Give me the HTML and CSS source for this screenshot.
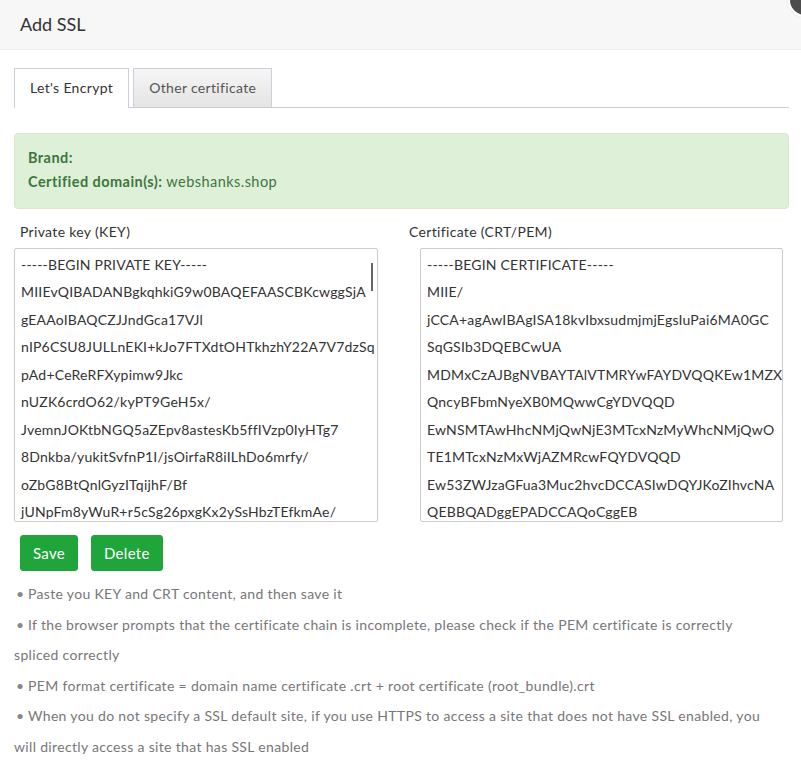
FILE: index.html
```html
<!DOCTYPE html>
<html>
<head>
  <meta charset="UTF-8" />
  <title>Add SSL</title>
  <link rel="stylesheet" href="styles.css">
</head>
<body>

<div class="layer">
  <div class="layer-title">Add SSL</div>
  <span class="layer-close"></span>

  <div class="layer-content">
    <!-- onglets -->
    <div class="tabs">
      <span class="tab active">Let's Encrypt</span>
      <span class="tab">Other certificate</span>
    </div>

    <div class="alert">
      <p><b>Brand:</b></p>
      <p><b>Certified domain(s):</b> webshanks.shop</p>
    </div>

    <div class="cert-grid">
      <div class="cert-col key-col">
        <div class="cert-label">Private key (KEY)</div>
        <div class="area-wrap">
          <textarea wrap="off" spellcheck="false">-----BEGIN PRIVATE KEY-----
MIIEvQIBADANBgkqhkiG9w0BAQEFAASCBKcwggSjA
gEAAoIBAQCZJJndGca17VJl
nIP6CSU8JULLnEKI+kJo7FTXdtOHTkhzhY22A7V7dzSq
pAd+CeReRFXypimw9Jkc
nUZK6crdO62/kyPT9GeH5x/
JvemnJOKtbNGQ5aZEpv8astesKb5ffIVzp0IyHTg7
8Dnkba/yukitSvfnP1I/jsOirfaR8iILhDo6mrfy/
oZbG8BtQnlGyzITqijhF/Bf
jUNpFm8yWuR+r5cSg26pxgKx2ySsHbzTEfkmAe/
aY4RmC0QAbD7mXlcVq2N</textarea>
          <span class="scroll-thumb"></span>
        </div>
      </div>
      <div class="cert-col crt-col">
        <div class="cert-label">Certificate (CRT/PEM)</div>
        <div class="area-wrap">
          <textarea wrap="off" spellcheck="false">-----BEGIN CERTIFICATE-----
MIIE/
jCCA+agAwIBAgISA18kvIbxsudmjmjEgsIuPai6MA0GC
SqGSIb3DQEBCwUA
MDMxCzAJBgNVBAYTAlVTMRYwFAYDVQQKEw1MZX
QncyBFbmNyeXB0MQwwCgYDVQQD
EwNSMTAwHhcNMjQwNjE3MTcxNzMyWhcNMjQwO
TE1MTcxNzMxWjAZMRcwFQYDVQQD
Ew53ZWJzaGFua3Muc2hvcDCCASIwDQYJKoZIhvcNA
QEBBQADggEPADCCAQoCggEB</textarea>
        </div>
      </div>
    </div>

    <div class="actions">
      <button class="btn">Save</button>
      <button class="btn">Delete</button>
    </div>

    <ul class="help">
      <li>Paste you KEY and CRT content, and then save it</li>
      <li>If the browser prompts that the certificate chain is incomplete, please check if the PEM certificate is correctly spliced correctly</li>
      <li>PEM format certificate = domain name certificate .crt + root certificate (root_bundle).crt</li>
      <li>When you do not specify a SSL default site, if you use HTTPS to access a site that does not have SSL enabled, you will directly access a site that has SSL enabled</li>
    </ul>
  </div>
</div>

</body>
</html>
```

FILE: styles.css
```css
body {
  margin: 0;
  font-family: "Segoe UI", Lato, "Open Sans", sans-serif;
  font-size: 14px;
  letter-spacing: 0.33px;
  color: #333;
  background: #fff;
  overflow: hidden;
}

.layer {
  position: relative;
  width: 801px;
  height: 769px;
}

.layer-title {
  height: 49px;
  line-height: 49px;
  padding-left: 20px;
  font-size: 18px;
  letter-spacing: 0;
  color: #333;
  background-color: #f7f7f7;
  border-bottom: 1px solid #eee;
}

.layer-close {
  position: absolute;
  top: -15px;
  right: -19px;
  width: 30px;
  height: 30px;
  border-radius: 50%;
  background-color: #4d4d4d;
  box-shadow: 0 0 0 2px #fff, 0 0 2px 2px #ddd;
}

.layer-content {
  padding: 18px 12px 0 14px;
}

.tabs {
  display: flex;
  gap: 4px;
  height: 39px;
  border-bottom: 1px solid #ccc;
}

.tab {
  padding: 0 15px;
  line-height: 38px;
  height: 38px;
  font-size: 14px;
  letter-spacing: 0.33px;
  color: #555;
  border: 1px solid #d0ceda;
  border-bottom: none;
  background: linear-gradient(#f6f6f6, #e4e4e4);
}

.tab.active {
  height: 39px;
  background: #fff;
  color: #333;
}

.alert {
  margin-top: 25px;
  padding: 12px 13px;
  min-height: 50px;
  background-color: #dff0d8;
  border: 1px solid #d6e9c6;
  border-radius: 4px;
  font-size: 14.5px;
  letter-spacing: 0.45px;
  color: #3c763d;
}

.alert p {
  margin: 0;
  line-height: 24px;
}

.cert-grid {
  display: grid;
  grid-template-columns: 395px 1fr;
  margin-top: 11px;
}

.cert-label {
  line-height: 24px;
  margin-bottom: 4px;
  color: #333;
}

.key-col .cert-label {
  padding-left: 6px;
}

.key-col .area-wrap {
  width: 364px;
}

.crt-col .area-wrap {
  width: 363px;
  margin-left: 11px;
}

.area-wrap {
  position: relative;
}

textarea {
  display: block;
  box-sizing: border-box;
  width: 100%;
  height: 274px;
  margin: 0;
  padding: 2px 6px;
  font-family: inherit;
  font-size: 14px;
  letter-spacing: 0.2px;
  line-height: 27.45px;
  color: #333;
  border: 1px solid #ccc;
  border-radius: 2px;
  resize: none;
  overflow: hidden;
  outline: none;
}

.scroll-thumb {
  position: absolute;
  top: 15px;
  right: 5px;
  width: 2px;
  height: 28px;
  background-color: #666;
}

.actions {
  display: flex;
  gap: 13px;
  margin-top: 13px;
  padding-left: 6px;
}

.btn {
  height: 36px;
  padding: 0 12px;
  font-family: inherit;
  font-size: 15px;
  letter-spacing: 0.3px;
  color: #fff;
  background-color: #20a53a;
  border: 1px solid #20a53a;
  border-radius: 3px;
  cursor: pointer;
}

.help {
  list-style: none;
  margin: 8px 0 0;
  padding: 0 15px 0 0;
  color: #777;
}

.help li {
  line-height: 30.6px;
}

.help li::before {
  content: "•";
  display: inline-block;
  box-sizing: border-box;
  width: 14px;
  padding-left: 2px;
  text-align: left;
  color: #888;
}
```
